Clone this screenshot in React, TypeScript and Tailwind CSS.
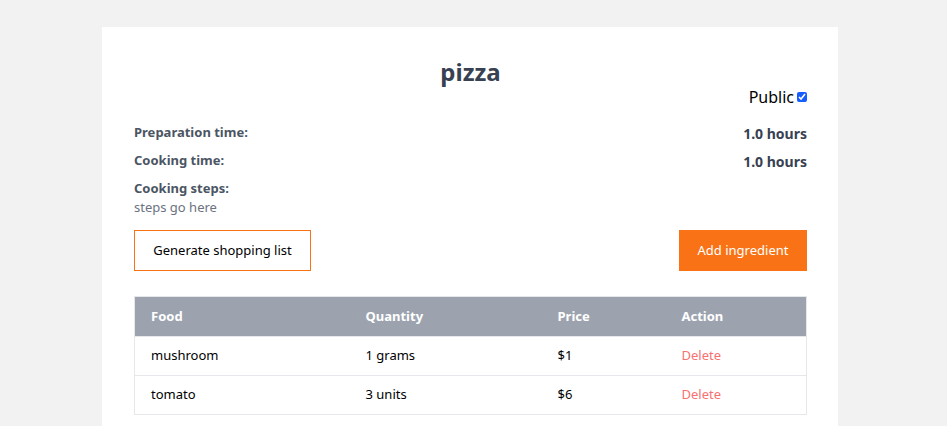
import React from "react";

export default function App() {
  const rows = [
    { food: "mushroom", qty: "1 grams", price: "$1" },
    { food: "tomato", qty: "3 units", price: "$6" },
  ];
  return (
    <div className="min-h-[426px] bg-[#f2f2f2] pt-[27px]" style={{ fontFamily: '"Noto Sans", "Open Sans", sans-serif' }}>
      <div className="ml-[102px] w-[736px] bg-white pl-8 pr-[31px] pt-[29px] pb-8">
        <h1 className="text-center text-2xl font-bold text-[#374151] leading-8">pizza</h1>
        <div className="flex justify-end items-center gap-[3px] mt-[-3px] h-[24px]">
          <span className="text-[16px] text-black">Public</span>
          <input type="checkbox" defaultChecked className="w-[10px] h-[10px] accent-blue-600" />
        </div>
        <div className="mt-[14px] flex justify-between items-center h-[20px]">
          <span className="text-[13px] font-bold text-[#4b5563]">Preparation time:</span>
          <span className="text-[14px] font-bold text-[#374151]">1.0 hours</span>
        </div>
        <div className="mt-[8px] flex justify-between items-center h-[20px]">
          <span className="text-[13px] font-bold text-[#4b5563]">Cooking time:</span>
          <span className="text-[14px] font-bold text-[#374151]">1.0 hours</span>
        </div>
        <div className="mt-[8px] h-[20px] flex items-center">
          <span className="text-[13px] font-bold text-[#4b5563]">Cooking steps:</span>
        </div>
        <div className="text-[13px] text-[#6b7280] h-[17px] leading-[17px]">steps go here</div>
        <div className="mt-[14px] flex justify-between">
          <button className="h-[41px] w-[177px] border border-[#f97316] text-[13px] text-black bg-white">
            Generate shopping list
          </button>
          <button className="h-[41px] w-[128px] bg-[#f97316] text-[13px] text-white">Add ingredient</button>
        </div>
        <table className="mt-[25px] w-full border border-[#e5e7eb] border-collapse text-[13px]">
          <thead>
            <tr className="bg-[#9ca3af] text-white h-[40px] text-left">
              <th className="pl-4 w-[231px] font-bold">Food</th>
              <th className="w-[192px] font-bold">Quantity</th>
              <th className="w-[124px] font-bold">Price</th>
              <th className="font-bold">Action</th>
            </tr>
          </thead>
          <tbody>
            {rows.map((r) => (
              <tr key={r.food} className="h-[39px] border-t border-[#e5e7eb] text-black">
                <td className="pl-4">{r.food}</td>
                <td>{r.qty}</td>
                <td>{r.price}</td>
                <td className="text-[#f87171]">Delete</td>
              </tr>
            ))}
          </tbody>
        </table>
      </div>
    </div>
  );
}
